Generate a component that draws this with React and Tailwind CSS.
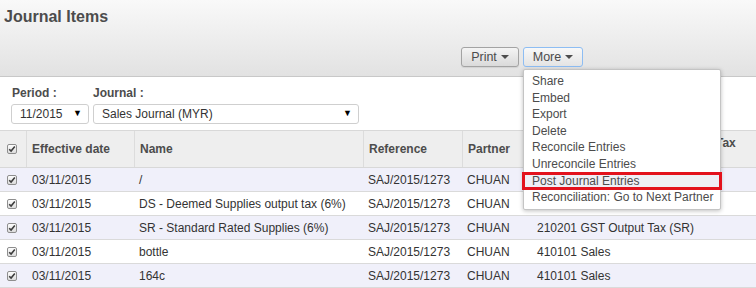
const rows = [
  { date: "03/11/2015", name: "/", ref: "SAJ/2015/1273", partner: "CHUAN", account: "" },
  { date: "03/11/2015", name: "DS - Deemed Supplies output tax (6%)", ref: "SAJ/2015/1273", partner: "CHUAN", account: "" },
  { date: "03/11/2015", name: "SR - Standard Rated Supplies (6%)", ref: "SAJ/2015/1273", partner: "CHUAN", account: "210201 GST Output Tax (SR)" },
  { date: "03/11/2015", name: "bottle", ref: "SAJ/2015/1273", partner: "CHUAN", account: "410101 Sales" },
  { date: "03/11/2015", name: "164c", ref: "SAJ/2015/1273", partner: "CHUAN", account: "410101 Sales" },
]

const menu = [
  "Share",
  "Embed",
  "Export",
  "Delete",
  "Reconcile Entries",
  "Unreconcile Entries",
  "Post Journal Entries",
  "Reconciliation: Go to Next Partner",
]

function Check() {
  return (
    <span className="flex h-[10px] w-[10px] items-center justify-center rounded-[2px] border border-[#8e8e8e] bg-gradient-to-b from-[#fdfdfd] to-[#dcdcdc]">
      <svg width="8" height="8" viewBox="0 0 8 8">
        <path d="M1.2 4.2 L3.1 6.1 L6.8 1.6" fill="none" stroke="#3c3c3c" strokeWidth="1.6" />
      </svg>
    </span>
  )
}

function Caret() {
  return <span className="ml-[4px] inline-block h-0 w-0 border-x-[4px] border-t-[4px] border-x-transparent border-t-[#4c4c4c]" />
}

const cols = "grid grid-cols-[26px_108px_229px_99px_69px_180px_1fr]"

export default function App() {
  return (
    <div className="h-[288px] w-[756px] overflow-hidden bg-white font-['Liberation_Sans',Arial,sans-serif] text-[12px] text-[#4c4c4c]">
      <div className="h-[77px] border-b border-[#c8c8c8] bg-gradient-to-b from-[#f9f9f9] to-[#e2e2e2]">
        <h2 className="pl-[4px] pt-[7px] text-[16px] font-bold leading-[20px] text-[#4c4c4c]">Journal Items</h2>
        <div className="ml-[461px] mt-[20px] flex gap-[4px]">
          <button className="flex h-[20px] w-[58px] items-center justify-center rounded-[3px] border border-[#a3a3a3] bg-gradient-to-b from-[#f4f4f4] to-[#dadada] text-[12.5px] text-[#4c4c4c] shadow-[0_1px_1px_rgba(0,0,0,0.08)]">
            Print
            <Caret />
          </button>
          <div className="relative">
            <button className="flex h-[20px] w-[60px] items-center justify-center rounded-[3px] border border-[#8dbdf3] bg-gradient-to-b from-[#f8f8f8] to-[#e4e4e4] text-[12.5px] text-[#4c4c4c]">
              More
              <Caret />
            </button>
            <div className="absolute left-0 top-[22px] z-10 w-[198px] rounded-[2px] border border-[#c4c4c4] bg-white pb-[4px] pt-[3px] shadow-[0_1px_4px_rgba(0,0,0,0.25)]">
              {menu.map((m) =>
                m === "Post Journal Entries" ? (
                  <div key={m} className="-mx-[2px] -my-[1px] border-[3px] border-[#e3121c] bg-[#efeff5] pl-[7px] text-[12px] leading-[12px] text-[#4c4c4c]">
                    {m}
                  </div>
                ) : (
                  <div key={m} className="pl-[8px] text-[12px] leading-[16.6px] text-[#4c4c4c]">
                    {m}
                  </div>
                )
              )}
            </div>
          </div>
        </div>
      </div>

      <div className="h-[53px] pl-[11px] pt-[9px]">
        <div className="flex gap-[4px]">
          <div className="w-[78px]">
            <div className="pl-[1px] text-[12px] font-bold leading-[14px]">Period :</div>
            <div className="mt-[4px] flex h-[20px] items-center justify-between rounded-[3px] border border-[#cfcfcf] bg-white pl-[8px] pr-[6px] text-[#333]">
              <span>11/2015</span>
              <span className="text-[9px] text-black">▼</span>
            </div>
          </div>
          <div className="w-[266px]">
            <div className="text-[12px] font-bold leading-[14px]">Journal :</div>
            <div className="mt-[4px] flex h-[20px] items-center justify-between rounded-[3px] border border-[#cfcfcf] bg-white pl-[8px] pr-[6px] text-[#333]">
              <span>Sales Journal (MYR)</span>
              <span className="text-[9px] text-black">▼</span>
            </div>
          </div>
        </div>
      </div>

      <div className={`${cols} h-[38px] border-y border-[#d8d8d8] bg-[#eeeeee] font-bold text-[#4c4c4c]`}>
        <div className="flex items-center pl-[7px]">
          <Check />
        </div>
        <div className="flex items-center border-l border-[#dcdcdc] pl-[5px]">Effective date</div>
        <div className="flex items-center border-l border-[#dcdcdc] pl-[5px]">Name</div>
        <div className="flex items-center border-l border-[#dcdcdc] pl-[5px]">Reference</div>
        <div className="flex items-center border-l border-[#dcdcdc] pl-[5px]">Partner</div>
        <div className="border-l border-[#dcdcdc]" />
        <div className="border-l border-[#dcdcdc] pl-[4px] pt-[3px]">Tax</div>
      </div>

      {rows.map((r, i) => (
        <div key={i} className={`${cols} h-[24px] border-b border-[#dadada] text-[#333] ${i % 2 === 0 ? "bg-[#f0f0fa]" : "bg-white"}`}>
          <div className="flex items-center pl-[7px]">
            <Check />
          </div>
          <div className="flex items-center pl-[6px]">{r.date}</div>
          <div className="flex items-center pl-[5px]">{r.name}</div>
          <div className="flex items-center pl-[5px]">{r.ref}</div>
          <div className="flex items-center pl-[5px]">{r.partner}</div>
          <div className="flex items-center whitespace-nowrap pl-[6px]">{r.account}</div>
          <div />
        </div>
      ))}
    </div>
  )
}
